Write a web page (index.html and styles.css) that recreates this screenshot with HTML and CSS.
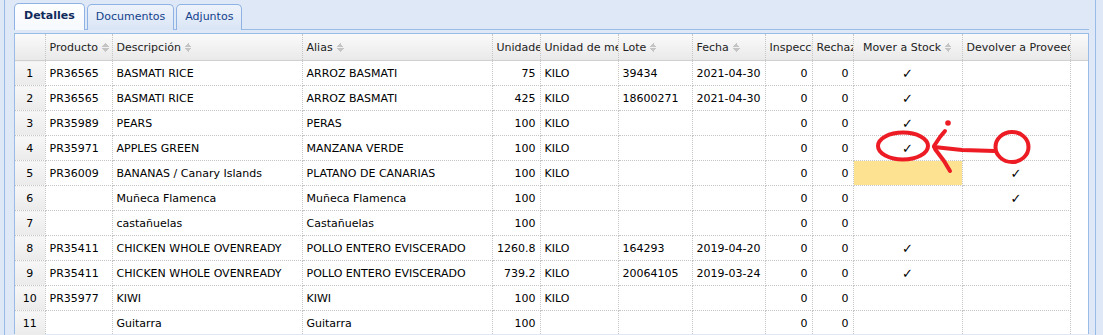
FILE: index.html
```html
<!DOCTYPE html>
<html lang="es">
<head>
  <meta charset="UTF-8" />
  <title>Detalles</title>
  <link rel="stylesheet" href="styles.css">
</head>
<body>
  <div class="panel">
    <div class="tabs">
      <div class="tab active">Detalles</div>
      <div class="tab">Documentos</div>
      <div class="tab">Adjuntos</div>
    </div>

    <div class="grid">
      <table>
        <colgroup>
          <col style="width:30px">
          <col style="width:67px">
          <col style="width:190px">
          <col style="width:190px">
          <col style="width:48px">
          <col style="width:78px">
          <col style="width:74px">
          <col style="width:73px">
          <col style="width:47px">
          <col style="width:41px">
          <col style="width:109px">
          <col style="width:108px">
          <col style="width:18px">
        </colgroup>
        <thead>
          <tr>
            <th></th>
            <th><div class="hd"><span class="sort">Producto</span></div></th>
            <th><div class="hd"><span class="sort">Descripción</span></div></th>
            <th><div class="hd"><span class="sort">Alias</span></div></th>
            <th><div class="hd">Unidades</div></th>
            <th><div class="hd">Unidad de medida</div></th>
            <th><div class="hd"><span class="sort">Lote</span></div></th>
            <th><div class="hd"><span class="sort">Fecha</span></div></th>
            <th><div class="hd">Inspección</div></th>
            <th><div class="hd">Rechazado</div></th>
            <th><div class="hd center"><span class="sort">Mover a Stock</span></div></th>
            <th><div class="hd">Devolver a Proveedor</div></th>
            <th class="fill"></th>
          </tr>
        </thead>
        <tbody>
          <tr>
            <td class="num">1</td><td>PR36565</td><td>BASMATI RICE</td><td>ARROZ BASMATI</td>
            <td class="r">75</td><td>KILO</td><td>39434</td><td>2021-04-30</td>
            <td class="r">0</td><td class="r">0</td><td class="c">✓</td><td></td><td class="fill"></td>
          </tr>
          <tr>
            <td class="num">2</td><td>PR36565</td><td>BASMATI RICE</td><td>ARROZ BASMATI</td>
            <td class="r">425</td><td>KILO</td><td>18600271</td><td>2021-04-30</td>
            <td class="r">0</td><td class="r">0</td><td class="c">✓</td><td></td><td class="fill"></td>
          </tr>
          <tr>
            <td class="num">3</td><td>PR35989</td><td>PEARS</td><td>PERAS</td>
            <td class="r">100</td><td>KILO</td><td></td><td></td>
            <td class="r">0</td><td class="r">0</td><td class="c">✓</td><td></td><td class="fill"></td>
          </tr>
          <tr>
            <td class="num">4</td><td>PR35971</td><td>APPLES GREEN</td><td>MANZANA VERDE</td>
            <td class="r">100</td><td>KILO</td><td></td><td></td>
            <td class="r">0</td><td class="r">0</td><td class="c">✓</td><td></td><td class="fill"></td>
          </tr>
          <tr>
            <td class="num">5</td><td>PR36009</td><td>BANANAS / Canary Islands</td><td>PLATANO DE CANARIAS</td>
            <td class="r">100</td><td>KILO</td><td></td><td></td>
            <td class="r">0</td><td class="r">0</td><td class="selected"></td><td class="c">✓</td><td class="fill"></td>
          </tr>
          <tr>
            <td class="num">6</td><td></td><td>Muñeca Flamenca</td><td>Muñeca Flamenca</td>
            <td class="r">100</td><td></td><td></td><td></td>
            <td class="r">0</td><td class="r">0</td><td></td><td class="c">✓</td><td class="fill"></td>
          </tr>
          <tr>
            <td class="num">7</td><td></td><td>castañuelas</td><td>Castañuelas</td>
            <td class="r">100</td><td></td><td></td><td></td>
            <td class="r">0</td><td class="r">0</td><td></td><td></td><td class="fill"></td>
          </tr>
          <tr>
            <td class="num">8</td><td>PR35411</td><td>CHICKEN WHOLE OVENREADY</td><td>POLLO ENTERO EVISCERADO</td>
            <td class="r">1260.8</td><td>KILO</td><td>164293</td><td>2019-04-20</td>
            <td class="r">0</td><td class="r">0</td><td class="c">✓</td><td></td><td class="fill"></td>
          </tr>
          <tr>
            <td class="num">9</td><td>PR35411</td><td>CHICKEN WHOLE OVENREADY</td><td>POLLO ENTERO EVISCERADO</td>
            <td class="r">739.2</td><td>KILO</td><td>20064105</td><td>2019-03-24</td>
            <td class="r">0</td><td class="r">0</td><td class="c">✓</td><td></td><td class="fill"></td>
          </tr>
          <tr>
            <td class="num">10</td><td>PR35977</td><td>KIWI</td><td>KIWI</td>
            <td class="r">100</td><td>KILO</td><td></td><td></td>
            <td class="r">0</td><td class="r">0</td><td></td><td></td><td class="fill"></td>
          </tr>
          <tr>
            <td class="num">11</td><td></td><td>Guitarra</td><td>Guitarra</td>
            <td class="r">100</td><td></td><td></td><td></td>
            <td class="r">0</td><td class="r">0</td><td></td><td></td><td class="fill"></td>
          </tr>
        </tbody>
      </table>
    </div>
  </div>

  <!-- marcas a mano sobre la captura -->
  <svg class="notes" width="1103" height="335" viewBox="0 0 1103 335">
    <g fill="none" stroke="#ed1c24" stroke-width="4" stroke-linecap="round" stroke-linejoin="round">
      <ellipse cx="903" cy="146" rx="25" ry="13.5" />
      <ellipse cx="1012" cy="147" rx="16.5" ry="15" />
      <path d="M995 151 L962 150 L934 147" />
      <path d="M934 146 L940 137 L945 131" />
      <path d="M935 149 L944 161 L950 171" />
    </g>
    <circle cx="948" cy="123" r="2.8" fill="#ed1c24" />
  </svg>
</body>
</html>
```

FILE: styles.css
```css
body {
  margin: 0;
  background: #dfe8f6;
  font-family: 'DejaVu Sans', sans-serif;
  font-size: 11px;
  color: #000;
  overflow: hidden;
}

.panel {
  box-sizing: border-box;
  width: 1092px;
  height: 335px;
  margin-left: 4px;
  padding: 3px 6px 0 9px;
  border-left: 1px solid #99bbe8;
  border-right: 1px solid #99bbe8;
}

.tabs {
  display: flex;
  gap: 2px;
  height: 26px;
  border-bottom: 1px solid #99bbe8;
}

.tab {
  height: 25px;
  line-height: 24px;
  padding: 0 8px;
  margin-top: 1px;
  border: 1px solid #8db2e3;
  border-bottom: none;
  border-radius: 5px 5px 0 0;
  background: linear-gradient(#eef3fb, #d9e5f5);
  color: #15428b;
}

.tab.active {
  height: 26px;
  padding: 0 9px;
  margin-top: 0;
  margin-bottom: -1px;
  background: linear-gradient(#fdfeff, #f6f9fd);
  color: #0f2a5a;
  font-weight: bold;
}

.grid {
  margin-top: 3px;
  border: 1px solid #99bbe8;
  border-bottom: none;
  background: #fff;
  height: 300px;
}

table {
  width: 1073px;
  border-collapse: collapse;
  table-layout: fixed;
}

th {
  height: 26px;
  padding: 0;
  text-align: left;
  font-weight: normal;
  color: #222;
  background: linear-gradient(#fafafa, #e9e9e9);
  border-right: 1px dotted #c6c6c6;
  border-bottom: 1px solid #d0d0d0;
}

th.fill {
  border-right: none;
}

.hd {
  padding: 0 4px;
  white-space: nowrap;
  overflow: hidden;
}

.hd.center {
  text-align: center;
}

.sort::after {
  content: "";
  display: inline-block;
  width: 7px;
  height: 9px;
  margin-left: 4px;
  vertical-align: -1px;
  background:
    linear-gradient(to bottom right, transparent 50%, #c4c4c4 50%) 0 0 / 4px 4px no-repeat,
    linear-gradient(to bottom left, transparent 50%, #c4c4c4 50%) 3px 0 / 4px 4px no-repeat,
    linear-gradient(to top right, transparent 50%, #c4c4c4 50%) 0 5px / 4px 4px no-repeat,
    linear-gradient(to top left, transparent 50%, #c4c4c4 50%) 3px 5px / 4px 4px no-repeat;
}

td {
  height: 24px;
  padding: 0 4px;
  white-space: nowrap;
  overflow: hidden;
  border-right: 1px dotted #c6c6c6;
  border-bottom: 1px dotted #c6c6c6;
}

td.num {
  text-align: center;
  background: linear-gradient(#f7f7f7, #ebebeb);
}

td.r {
  text-align: right;
}

td.c {
  text-align: center;
  font-size: 13px;
  font-weight: bold;
}

td.selected {
  background: #fde391;
}

td.fill {
  border: none;
}

.notes {
  position: absolute;
  left: 0;
  top: 0;
  pointer-events: none;
}
```
